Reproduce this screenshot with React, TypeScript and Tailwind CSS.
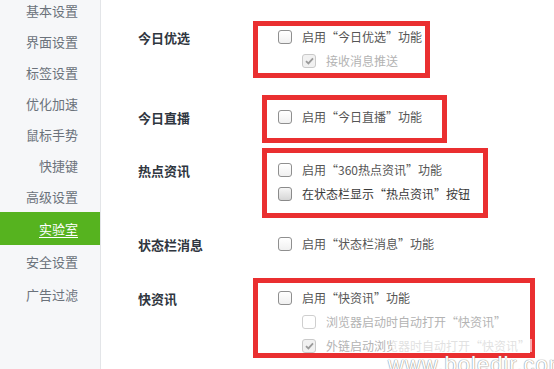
import React from "react";

type CbKind = "normal" | "hover" | "disabled" | "disabledChecked";

function Checkbox({ kind }: { kind: CbKind }) {
  if (kind === "disabledChecked") {
    return (
      <span className="w-[14px] h-[14px] border border-[#c9c9c9] rounded-[3px] bg-[#f1f1f1] flex items-center justify-center shrink-0">
        <svg width="9" height="8" viewBox="0 0 9 8">
          <path d="M1 4.2 L3.4 6.4 L8 1.4" fill="none" stroke="#9a9a9a" strokeWidth="1.8" />
        </svg>
      </span>
    );
  }
  if (kind === "disabled") {
    return <span className="w-[14px] h-[14px] border border-[#cfcfcf] rounded-[3px] bg-white shrink-0" />;
  }
  if (kind === "hover") {
    return (
      <span className="w-[14px] h-[14px] border border-[#8a8a8a] rounded-[3px] bg-gradient-to-b from-[#f6f6f6] to-[#d6d6d6] shrink-0" />
    );
  }
  return (
    <span className="w-[14px] h-[14px] border border-[#8f8f8f] rounded-[3px] bg-gradient-to-b from-white to-[#f0f0f0] shrink-0" />
  );
}

function Row({
  kind,
  text,
  sub,
  tone,
}: {
  kind: CbKind;
  text: string;
  sub?: boolean;
  tone?: "normal" | "dark" | "muted";
}) {
  const color =
    tone === "muted" ? "text-[#b3b3b3]" : tone === "dark" ? "text-[#3a3a3a]" : "text-[#555555]";
  return (
    <div className={`h-[24px] flex items-center gap-[10px] ${sub ? "pl-[24px]" : ""}`}>
      <Checkbox kind={kind} />
      <span className={`text-[12px] leading-none whitespace-nowrap ${color}`}>{text}</span>
    </div>
  );
}

function Section({
  label,
  children,
  mt,
}: {
  label: string;
  children: React.ReactNode;
  mt: string;
}) {
  return (
    <div className={`flex ${mt}`}>
      <div className="w-[140px] h-[24px] flex items-center text-[13px] font-bold text-[#2f3640] leading-none">
        {label}
      </div>
      <div className="flex flex-col">{children}</div>
    </div>
  );
}

const navItems = [
  { name: "基本设置", h: "h-[31px]" },
  { name: "界面设置", h: "h-[31px]" },
  { name: "标签设置", h: "h-[31px]" },
  { name: "优化加速", h: "h-[31px]" },
  { name: "鼠标手势", h: "h-[31px]" },
  { name: "快捷键", h: "h-[31px]" },
  { name: "高级设置", h: "h-[31px]" },
  { name: "实验室", h: "h-[33px]", active: true },
  { name: "安全设置", h: "h-[33px]" },
  { name: "广告过滤", h: "h-[33px]" },
];

export default function App() {
  return (
    <div
      className="w-[554px] h-[369px] bg-white flex overflow-hidden relative"
      style={{ fontFamily: '"Microsoft YaHei", "Noto Sans CJK SC", "Noto Sans", sans-serif' }}
    >
      <div className="w-[101px] h-full bg-[#f6f7f9] border-r border-[#e3e5e8] shrink-0 overflow-hidden">
        <div className="-mt-[5px] flex flex-col">
          {navItems.map((it) => (
            <div
              key={it.name}
              className={`${it.h} flex items-center justify-end pr-[22px] text-[13px] leading-none ${
                it.active ? "bg-[#56b31f] text-white underline underline-offset-[3px]" : "text-[#6b727b]"
              }`}
            >
              {it.name}
            </div>
          ))}
        </div>
      </div>

      <div className="flex-1 relative">
        <div className="flex flex-col pl-[37px] pt-[25px]">
          <Section label="今日优选" mt="mt-0">
            <Row kind="normal" text="启用“今日优选”功能" />
            <Row kind="disabledChecked" text="接收消息推送" sub tone="muted" />
          </Section>
          <Section label="今日直播" mt="mt-[32px]">
            <Row kind="normal" text="启用“今日直播”功能" />
          </Section>
          <Section label="热点资讯" mt="mt-[29px]">
            <Row kind="normal" text="启用“360热点资讯”功能" />
            <Row kind="hover" text="在状态栏显示“热点资讯”按钮" tone="dark" />
          </Section>
          <Section label="状态栏消息" mt="mt-[26px]">
            <Row kind="normal" text="启用“状态栏消息”功能" />
          </Section>
          <Section label="快资讯" mt="mt-[30px]">
            <Row kind="normal" text="启用“快资讯”功能" />
            <Row kind="disabled" text="浏览器启动时自动打开“快资讯”" sub tone="muted" />
            <Row kind="disabledChecked" text="外链启动浏览器时自动打开“快资讯”" sub tone="muted" />
          </Section>
        </div>
      </div>

      {/* red annotation boxes */}
      <div className="absolute left-[253px] top-[21px] w-[177px] h-[57px] border-[5px] border-[#ea2f30] pointer-events-none" />
      <div className="absolute left-[262px] top-[95px] w-[185px] h-[48px] border-[5px] border-[#ea2f30] pointer-events-none" />
      <div className="absolute left-[262px] top-[148px] w-[226px] h-[70px] border-[5px] border-[#ea2f30] pointer-events-none" />
      <div className="absolute left-[253px] top-[278px] w-[282px] h-[80px] border-[5px] border-[#ea2f30] pointer-events-none" />

      {/* watermark */}
      <div className="absolute left-[392px] top-[339px] w-[140px] h-[13px] bg-white/60 pointer-events-none" />
      <div
        className="absolute left-[388px] top-[354px] text-[22px] leading-none text-white whitespace-nowrap pointer-events-none tracking-[1px]"
        style={{ fontFamily: '"Liberation Sans", Arial, sans-serif', textShadow: "0 0 1px #888, 0 0 1px #888" }}
      >
        www.boledir.com
      </div>
    </div>
  );
}
